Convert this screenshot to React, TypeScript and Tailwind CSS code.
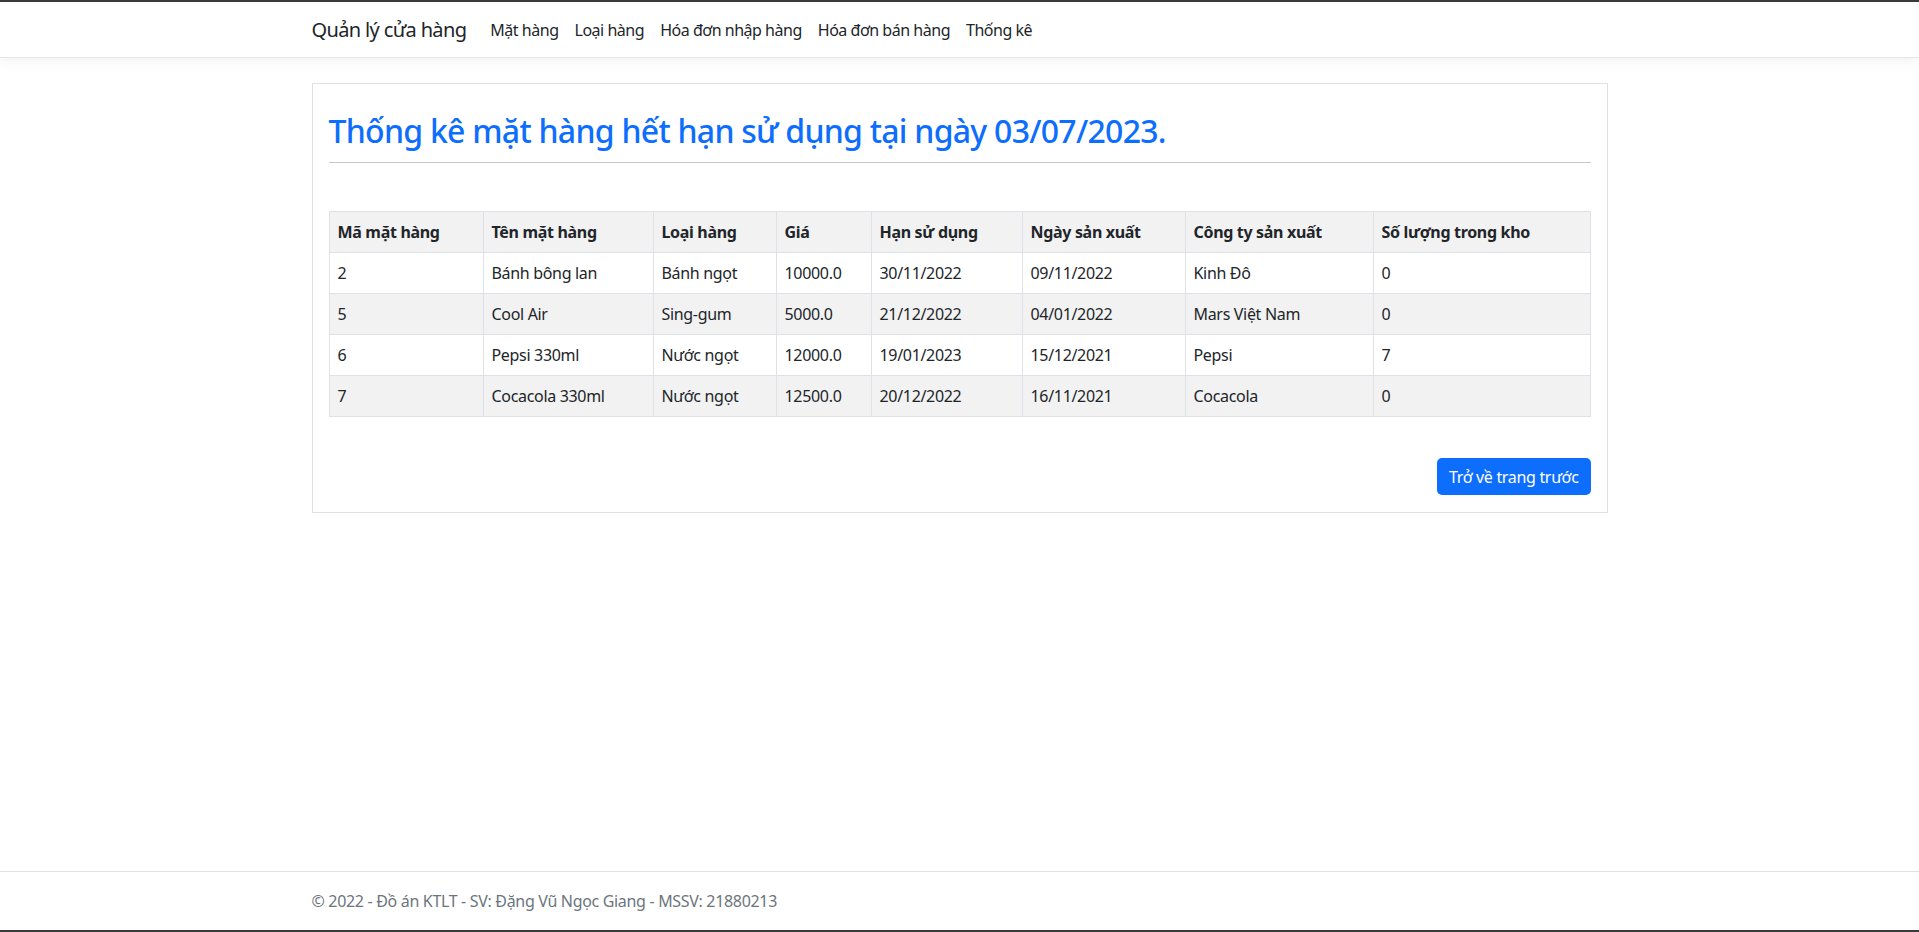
const rows = [
  { id: "2", name: "Bánh bông lan", type: "Bánh ngọt", price: "10000.0", exp: "30/11/2022", mfg: "09/11/2022", company: "Kinh Đô", qty: "0" },
  { id: "5", name: "Cool Air", type: "Sing-gum", price: "5000.0", exp: "21/12/2022", mfg: "04/01/2022", company: "Mars Việt Nam", qty: "0" },
  { id: "6", name: "Pepsi 330ml", type: "Nước ngọt", price: "12000.0", exp: "19/01/2023", mfg: "15/12/2021", company: "Pepsi", qty: "7" },
  { id: "7", name: "Cocacola 330ml", type: "Nước ngọt", price: "12500.0", exp: "20/12/2022", mfg: "16/11/2021", company: "Cocacola", qty: "0" },
];

const navLinks = ["Mặt hàng", "Loại hàng", "Hóa đơn nhập hàng", "Hóa đơn bán hàng", "Thống kê"];

const App = () => {
  return (
    <div className="h-[932px] flex flex-col bg-white border-y-2 border-[#3a3a3a] text-[#212529] font-['Noto_Sans',sans-serif] overflow-hidden">
      <header className="h-[56px] shrink-0 bg-white border-b border-[#e5e5e5] shadow-[0_4px_12px_rgba(0,0,0,0.05)]">
        <nav className="max-w-[1320px] h-full mx-auto px-3 flex items-center">
          <a className="text-[20px] mr-4 text-[#212529] tracking-[-0.032em]">Quản lý cửa hàng</a>
          <ul className="flex">
            {navLinks.map((l) => (
              <li key={l}>
                <a className="block px-2 text-[16px] tracking-[-0.03em] text-[#212529]">{l}</a>
              </li>
            ))}
          </ul>
        </nav>
      </header>

      <main className="w-full max-w-[1320px] mx-auto px-3 mt-[25px]">
        <section className="border border-[#dfdfdf] px-4 pt-4 pb-[17px]">
          <h2 className="mt-[12px] text-[32px] leading-[1.2] font-medium text-[#0d6efd] tracking-[-0.023em]">
            Thống kê mặt hàng hết hạn sử dụng tại ngày 03/07/2023.
          </h2>
          <hr className="mt-3 mb-[48px] border-0 border-t border-[#c8c8c8]" />

          <table className="w-full border-collapse text-[16px] leading-6 tracking-[-0.02em]">
            <thead>
              <tr className="bg-[#f2f2f2]">
                <th className="w-[154px] border border-[#dee2e6] px-2 py-2 text-left font-bold">Mã mặt hàng</th>
                <th className="w-[170px] border border-[#dee2e6] px-2 py-2 text-left font-bold">Tên mặt hàng</th>
                <th className="w-[123px] border border-[#dee2e6] px-2 py-2 text-left font-bold">Loại hàng</th>
                <th className="w-[95px] border border-[#dee2e6] px-2 py-2 text-left font-bold">Giá</th>
                <th className="w-[151px] border border-[#dee2e6] px-2 py-2 text-left font-bold">Hạn sử dụng</th>
                <th className="w-[163px] border border-[#dee2e6] px-2 py-2 text-left font-bold">Ngày sản xuất</th>
                <th className="w-[188px] border border-[#dee2e6] px-2 py-2 text-left font-bold">Công ty sản xuất</th>
                <th className="border border-[#dee2e6] px-2 py-2 text-left font-bold">Số lượng trong kho</th>
              </tr>
            </thead>
            <tbody>
              {rows.map((r, i) => (
                <tr key={r.id} className={i % 2 === 1 ? "bg-[#f2f2f2]" : "bg-white"}>
                  <td className="border border-[#dee2e6] px-2 py-2">{r.id}</td>
                  <td className="border border-[#dee2e6] px-2 py-2">{r.name}</td>
                  <td className="border border-[#dee2e6] px-2 py-2">{r.type}</td>
                  <td className="border border-[#dee2e6] px-2 py-2">{r.price}</td>
                  <td className="border border-[#dee2e6] px-2 py-2">{r.exp}</td>
                  <td className="border border-[#dee2e6] px-2 py-2">{r.mfg}</td>
                  <td className="border border-[#dee2e6] px-2 py-2">{r.company}</td>
                  <td className="border border-[#dee2e6] px-2 py-2">{r.qty}</td>
                </tr>
              ))}
            </tbody>
          </table>

          <div className="flex justify-end mt-[41px]">
            <button type="button" className="h-[37px] px-3 rounded-[5px] bg-[#0d6efd] text-white text-[16px] tracking-[-0.02em]">
              Trở về trang trước
            </button>
          </div>
        </section>
      </main>

      <footer className="mt-auto h-[59px] shrink-0 border-t border-[#dee2e6]">
        <div className="max-w-[1320px] mx-auto px-3 leading-[59px] text-[16px] text-[#6c757d] tracking-[-0.02em]">
          © 2022 - Đồ án KTLT - SV: Đặng Vũ Ngọc Giang - MSSV: 21880213
        </div>
      </footer>
    </div>
  );
};

export default App;
